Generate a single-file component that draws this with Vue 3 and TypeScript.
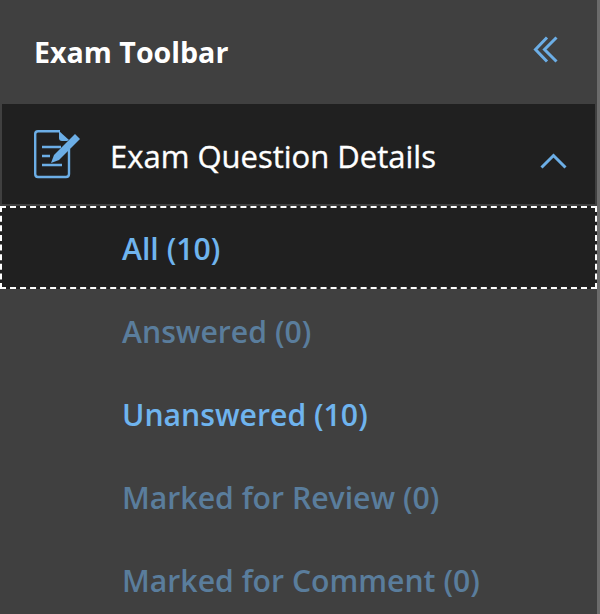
<script setup lang="ts">
interface Item { label: string; on: boolean; focus?: boolean }
const items: Item[] = [
  { label: 'All (10)', on: true, focus: true },
  { label: 'Answered (0)', on: false },
  { label: 'Unanswered (10)', on: true },
  { label: 'Marked for Review (0)', on: false },
  { label: 'Marked for Comment (0)', on: false },
]
</script>

<template>
  <div class="page">
    <aside class="panel">
      <header class="top">
        <h1 class="title">Exam Toolbar</h1>
        <svg class="collapse" width="25" height="27" viewBox="0 0 25 27" fill="none" stroke="#6caee6" stroke-width="3">
          <path d="M14 1.5 L2.5 13.5 L14 25.5" />
          <path d="M23.5 1.5 L11.5 13.5 L23.5 25.5" />
        </svg>
      </header>
      <div class="section">
        <svg class="doc" width="48" height="50" viewBox="0 0 48 50" fill="none">
          <path d="M27 2.2 H5 Q2.2 2.2 2.2 5 V45 Q2.2 48 5 48 H33 Q36 48 36 45 V20" stroke="#6caee6" stroke-width="2.4" />
          <path d="M26 2 V9 Q26 12 29 12 H34 L36 11 Z" fill="#6caee6" />
          <path d="M9 18 H28 M9 27 H17 M9 36 H29" stroke="#6caee6" stroke-width="2.4" />
          <path d="M42 5 L47 10 L26 31 L18 34 L21 26 Z" fill="#6caee6" />
        </svg>
        <span class="section-label">Exam Question Details</span>
        <svg class="chevron" width="27" height="16" viewBox="0 0 27 16" fill="none" stroke="#6caee6" stroke-width="3">
          <path d="M1.5 14.5 L13.5 2.5 L25.5 14.5" />
        </svg>
      </div>
      <ul class="list">
        <li v-for="item in items" :key="item.label" class="row" :class="{ focus: item.focus, dim: !item.on }">{{ item.label }}</li>
      </ul>
    </aside>
  </div>
</template>

<style>
html, body { margin: 0; background: #404040; }
</style>

<style scoped>
.page {
  width: 600px;
  height: 614px;
  overflow: hidden;
  background: #404040;
  font-family: "Open Sans", "Noto Sans", sans-serif;
  box-sizing: border-box;
  border-right: 3px solid #6b6b6b;
}
.panel { display: flex; flex-direction: column; }
.top {
  height: 104px;
  display: flex;
  align-items: center;
  justify-content: space-between;
  padding: 0 39px 2px 34px;
  box-sizing: border-box;
}
.title { margin: 0; font-size: 28.6px; font-weight: 700; color: #fff; }
.collapse { margin-top: -3px; }
.section {
  height: 100px;
  margin: 0 2px;
  background: #202020;
  display: flex;
  align-items: center;
  padding-left: 31px;
  position: relative;
}
.section-label { margin-left: 29px; padding-top: 3px; font-size: 31px; color: #fff; -webkit-text-stroke: 0.35px #fff; }
.chevron { position: absolute; right: 28px; top: 49px; }
.list { list-style: none; margin: 0; padding: 2px 0 0; }
.row {
  height: 83px;
  box-sizing: border-box;
  display: flex;
  align-items: center;
  padding: 2px 0 0 122px;
  font-size: 30.2px;
  font-weight: 600;
  color: #6fb4ee;
}
.row.dim { color: #5a7d9c; }
.row.focus { background: #202020; outline: 2px dashed #fff; outline-offset: -2px; }
</style>
